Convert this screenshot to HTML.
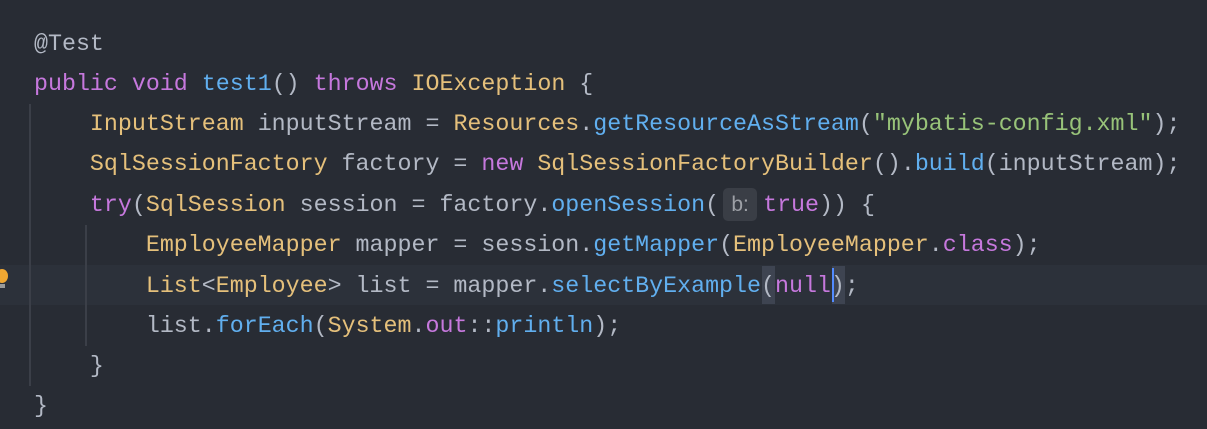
<!DOCTYPE html>
<html><head><style>
html,body{margin:0;padding:0;width:1207px;height:429px;background:#282c34;overflow:hidden}
.l{position:absolute;left:34px;height:40px;line-height:40px;font-family:"Liberation Mono",monospace;font-size:23.3px;color:#b3b9c5;white-space:pre}
.k{color:#c678dd}.t{color:#e5c07b}.m{color:#61afef}.s{color:#98c379}
.g{position:absolute;width:2px;background:#3b3f48}
.h{display:inline-block;vertical-align:top;margin-top:3px;width:34px;height:33px;line-height:33px;margin-left:4px;margin-right:6px;border-radius:5px;background:#3a3e46;color:#9da0a6;font-family:"Liberation Sans",sans-serif;font-size:21px;text-align:center}
</style></head><body>
<div style="position:absolute;left:0;top:265px;width:1207px;height:40px;background:#2c313a"></div>
<div class="g" style="left:29px;top:104px;height:282px"></div>
<div class="g" style="left:85px;top:225px;height:121px"></div>
<div style="position:absolute;left:-4px;top:269px;width:12px;height:14px;border-radius:50%;background:#f0a732"></div>
<div style="position:absolute;left:-1px;top:284px;width:6px;height:4px;background:#9a9a9a"></div>
<div style="position:absolute;left:762px;top:266px;width:13px;height:38px;background:#3e4451"></div>
<div style="position:absolute;left:832px;top:266px;width:13px;height:38px;background:#3e4451"></div>
<div style="position:absolute;left:832px;top:268px;width:2px;height:34px;background:#528bff;z-index:2"></div>
<div class="l" style="top:24px">@Test</div>
<div class="l" style="top:64px"><span class="k">public void</span> <span class="m">test1</span>() <span class="k">throws</span> <span class="t">IOException</span> {</div>
<div class="l" style="top:104px">    <span class="t">InputStream</span> inputStream = <span class="t">Resources</span>.<span class="m">getResourceAsStream</span>(<span class="s">"mybatis-config.xml"</span>);</div>
<div class="l" style="top:144px">    <span class="t">SqlSessionFactory</span> factory = <span class="k">new</span> <span class="t">SqlSessionFactoryBuilder</span>().<span class="m">build</span>(inputStream);</div>
<div class="l" style="top:185px">    <span class="k">try</span>(<span class="t">SqlSession</span> session = factory.<span class="m">openSession</span>(<span class="h">b:</span><span class="k">true</span>)) {</div>
<div class="l" style="top:225px">        <span class="t">EmployeeMapper</span> mapper = session.<span class="m">getMapper</span>(<span class="t">EmployeeMapper</span>.<span class="k">class</span>);</div>
<div class="l" style="top:266px">        <span class="t">List</span>&lt;<span class="t">Employee</span>&gt; list = mapper.<span class="m">selectByExample</span>(<span class="k">null</span>);</div>
<div class="l" style="top:306px">        list.<span class="m">forEach</span>(<span class="t">System</span>.<span class="k">out</span>::<span class="m">println</span>);</div>
<div class="l" style="top:346px">    }</div>
<div class="l" style="top:386px">}</div>
</body></html>
